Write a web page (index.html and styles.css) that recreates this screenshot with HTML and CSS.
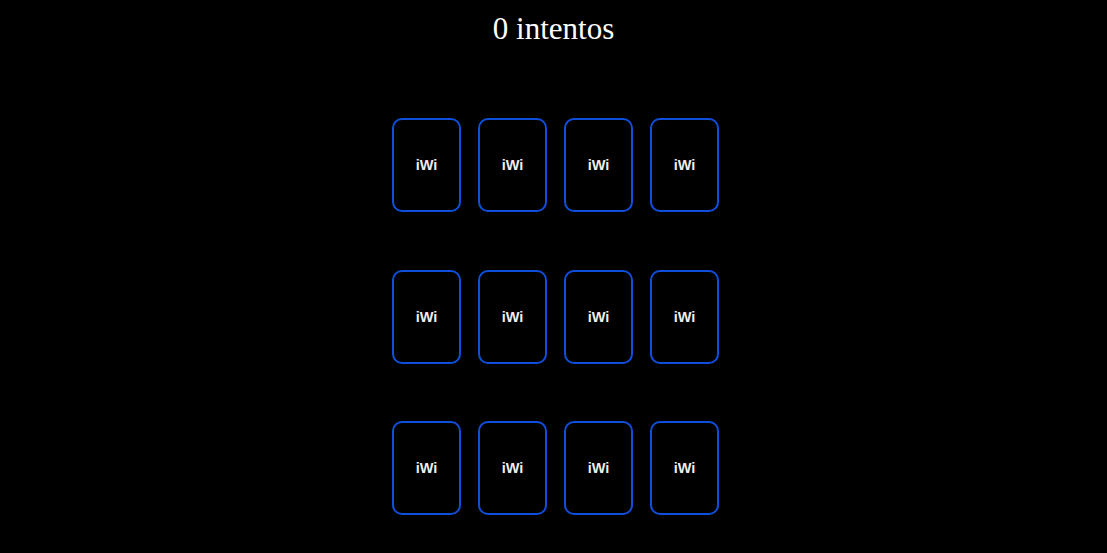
FILE: index.html
```html
<!DOCTYPE html>
<html>
<head>
<meta charset="utf-8">
<link rel="stylesheet" href="styles.css">
</head>
<body>
<h1 class="title">0 intentos</h1>
<div class="board">
  <div class="card"><span>iWi</span></div>
  <div class="card"><span>iWi</span></div>
  <div class="card"><span>iWi</span></div>
  <div class="card"><span>iWi</span></div>
  <div class="card"><span>iWi</span></div>
  <div class="card"><span>iWi</span></div>
  <div class="card"><span>iWi</span></div>
  <div class="card"><span>iWi</span></div>
  <div class="card"><span>iWi</span></div>
  <div class="card"><span>iWi</span></div>
  <div class="card"><span>iWi</span></div>
  <div class="card"><span>iWi</span></div>
</div>
</body>
</html>
```
FILE: styles.css
```css
html, body {
  margin: 0;
  padding: 0;
  background: #000;
  height: 100%;
  overflow: hidden;
}
body {
  font-family: "Liberation Serif", "Times New Roman", serif;
  color: #fff;
}
.title {
  margin: 0;
  padding-top: 11px;
  font-size: 31px;
  font-weight: normal;
  line-height: 36px;
  text-align: center;
}
.board {
  display: grid;
  grid-template-columns: repeat(4, 69px);
  column-gap: 17px;
  row-gap: 57.5px;
  justify-content: center;
  margin-top: 71px;
  padding-left: 4px;
}
.card {
  box-sizing: border-box;
  width: 69px;
  height: 94px;
  border: 2px solid #0f4fdc;
  border-radius: 10px;
  display: flex;
  align-items: center;
  justify-content: center;
}
.card span {
  font-family: "Liberation Sans", Arial, sans-serif;
  font-weight: bold;
  font-size: 14.5px;
  color: #eee;
}
```
